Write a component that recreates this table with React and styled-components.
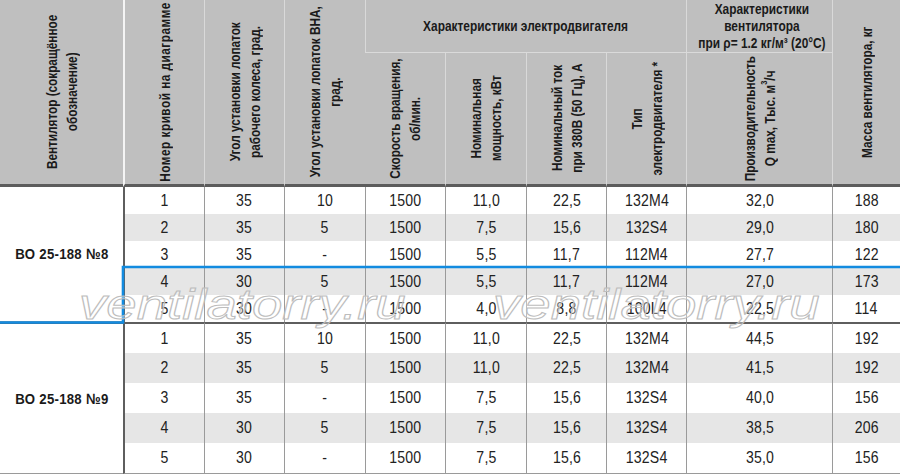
import React from 'react';
import styled, { createGlobalStyle } from 'styled-components';

const SANS = `"Liberation Sans", Arial, sans-serif`;

const GlobalStyle = createGlobalStyle`
  html, body {
    margin: 0;
    padding: 0;
    background: #fff;
  }
  body {
    font-family: ${SANS};
    color: #1e1e1e;
  }
`;

const COLUMNS = [123, 81, 80, 81, 80, 81, 80, 80, 146, 68];

const GROUPS = [
  {
    name: 'ВО 25-188 №8',
    heights: [27, 27, 27, 27, 27],
    rows: [
      ['1', '35', '10', '1500', '11,0', '22,5', '132M4', '32,0', '188'],
      ['2', '35', '5', '1500', '7,5', '15,6', '132S4', '29,0', '180'],
      ['3', '35', '-', '1500', '5,5', '11,7', '112M4', '27,7', '122'],
      ['4', '30', '5', '1500', '5,5', '11,7', '112M4', '27,0', '173'],
      ['5', '30', '-', '1500', '4,0', '8,8', '100L4', '22,5', '114'],
    ],
  },
  {
    name: 'ВО 25-188 №9',
    heights: [31, 30, 30, 30, 31],
    rows: [
      ['1', '35', '10', '1500', '11,0', '22,5', '132M4', '44,5', '192'],
      ['2', '35', '5', '1500', '11,0', '22,5', '132M4', '41,5', '192'],
      ['3', '35', '-', '1500', '7,5', '15,6', '132S4', '40,0', '156'],
      ['4', '30', '5', '1500', '7,5', '15,6', '132S4', '38,5', '206'],
      ['5', '30', '-', '1500', '7,5', '15,6', '132S4', '35,0', '156'],
    ],
  },
];

// tall header cell content: the frame keeps the row height fixed,
// the label is rotated to read bottom-to-top
function VerticalLabel({ children, spaced, height }) {
  return (
    <Frame $h={height}>
      <Rotated $spaced={spaced}>{children}</Rotated>
    </Frame>
  );
}

export default function App() {
  return (
    <>
      <GlobalStyle />
      <Sheet>
        <Table>
          <colgroup>
            {COLUMNS.map((w, i) => (
              <Col key={i} $w={w} />
            ))}
          </colgroup>
          <thead>
            <HeadRow $h={53}>
              <HeadCell rowSpan={2} $bottom>
                <VerticalLabel height={180}>
                  Вентилятор (сокращённое
                  <br />
                  обозначение)
                </VerticalLabel>
              </HeadCell>
              <HeadCell rowSpan={2} $bottom $first>
                <VerticalLabel height={180} spaced>
                  Номер кривой на диаграмме
                </VerticalLabel>
              </HeadCell>
              <HeadCell rowSpan={2} $bottom>
                <VerticalLabel height={180}>
                  Угол установки лопаток
                  <br />
                  рабочего колеса, град.
                </VerticalLabel>
              </HeadCell>
              <HeadCell rowSpan={2} $bottom>
                <VerticalLabel height={180}>
                  Угол установки лопаток ВНА,
                  <br />
                  град.
                </VerticalLabel>
              </HeadCell>
              <HeadCell colSpan={4} $split>
                <GroupTitle>Характеристики электродвигателя</GroupTitle>
              </HeadCell>
              <HeadCell $split>
                <GroupTitle>
                  Характеристики
                  <br />
                  вентилятора
                  <br />
                  при ρ= 1.2 кг/м³ (20°C)
                </GroupTitle>
              </HeadCell>
              <HeadCell rowSpan={2} $bottom>
                <VerticalLabel height={180}>Масса вентилятора, кг</VerticalLabel>
              </HeadCell>
            </HeadRow>
            <HeadRow $h={134}>
              <HeadCell $bottom>
                <VerticalLabel height={128}>
                  Скорость вращения,
                  <br />
                  об/мин.
                </VerticalLabel>
              </HeadCell>
              <HeadCell $bottom>
                <VerticalLabel height={128}>
                  Номинальная
                  <br />
                  мощность, кВт
                </VerticalLabel>
              </HeadCell>
              <HeadCell $bottom>
                <VerticalLabel height={128}>
                  Номинальный ток
                  <br />
                  при 380В (50 Гц), А
                </VerticalLabel>
              </HeadCell>
              <HeadCell $bottom>
                <VerticalLabel height={128}>
                  Тип
                  <br />
                  электродвигателя *
                </VerticalLabel>
              </HeadCell>
              <HeadCell $bottom>
                <VerticalLabel height={128}>
                  Производительность
                  <br />
                  Q max, Тыс. м<sup>3</sup>/ч
                </VerticalLabel>
              </HeadCell>
            </HeadRow>
          </thead>
          <tbody>
            {GROUPS.map((group, gi) =>
              group.rows.map((row, ri) => (
                <BodyRow key={`${gi}-${ri}`} $h={group.heights[ri]}>
                  {ri === 0 && (
                    <LabelCell rowSpan={group.rows.length} $divider={gi > 0}>
                      <Condensed $bold>{group.name}</Condensed>
                    </LabelCell>
                  )}
                  {row.map((value, ci) => (
                    <Cell
                      key={ci}
                      $first={ci === 0}
                      $shade={ri % 2 === 1}
                      $divider={gi > 0 && ri === 0}
                      $last={gi === GROUPS.length - 1 && ri === group.rows.length - 1}
                    >
                      <Condensed>{value}</Condensed>
                    </Cell>
                  ))}
                </BodyRow>
              ))
            )}
          </tbody>
        </Table>

        <Overlay>
          <Highlight width="900" height="474" viewBox="0 0 900 474">
            <polyline
              points="0,322.5 123,322.5 123,267 900,267"
              fill="none"
              stroke="#128be0"
              strokeWidth="2.6"
            />
          </Highlight>
          <Watermark $left={79}>ventilatorry.ru</Watermark>
          <Watermark $left={493}>ventilatorry.ru</Watermark>
        </Overlay>
      </Sheet>
    </>
  );
}

const Sheet = styled.div`
  position: relative;
  width: 900px;
  height: 474px;
  overflow: hidden;
  background: #fff;
`;

const Table = styled.table`
  width: 900px;
  table-layout: fixed;
  border-collapse: separate;
  border-spacing: 0;
  font-family: ${SANS};
`;

const Col = styled.col`
  width: ${p => p.$w}px;
`;

const HeadRow = styled.tr`
  height: ${p => p.$h}px;
`;

const HeadCell = styled.th`
  box-sizing: border-box;
  padding: 0;
  background: #bfbfbf;
  color: #1a1a1a;
  font-weight: 700;
  text-align: center;
  vertical-align: middle;
  overflow: hidden;
  border-left: ${p => (p.$first ? '2px solid #f4f4f4' : '1px solid #d9d9d9')};
  border-bottom: ${p =>
    p.$bottom ? '3px solid #5c5c5c' : p.$split ? '1px solid #dadada' : 'none'};

  &:first-child {
    border-left: none;
  }
`;

const GroupTitle = styled.div`
  display: inline-block;
  font-size: 14px;
  line-height: 17px;
  white-space: nowrap;
  transform: scaleX(0.85);
`;

const Frame = styled.div`
  height: ${p => p.$h}px;
  display: flex;
  align-items: center;
  justify-content: center;
`;

const Rotated = styled.span`
  display: inline-block;
  flex: none;
  writing-mode: vertical-rl;
  transform: rotate(180deg) scaleY(0.84);
  font-size: 14px;
  line-height: 20px;
  letter-spacing: ${p => (p.$spaced ? '0.6px' : '0')};
  white-space: nowrap;
  text-align: center;

  sup {
    font-size: 9px;
    line-height: 0;
  }
`;

const BodyRow = styled.tr`
  height: ${p => p.$h}px;
`;

const LabelCell = styled.td`
  box-sizing: border-box;
  padding: 0;
  background: #fff;
  text-align: center;
  vertical-align: middle;
  color: #1a1a1a;
  white-space: nowrap;
  border-top: ${p => (p.$divider ? '2px solid #5e5e5e' : 'none')};
  border-bottom: 1px solid #9a9a9a;
`;

const Cell = styled.td`
  box-sizing: border-box;
  padding: 0;
  text-align: center;
  vertical-align: middle;
  color: #222;
  white-space: nowrap;
  background: ${p => (p.$shade ? '#e6e6e6' : '#fff')};
  border-left: ${p => (p.$first ? '2px solid #5e5e5e' : '1px solid #9a9a9a')};
  border-top: ${p => (p.$divider ? '2px solid #5e5e5e' : 'none')};
  border-bottom: ${p => (p.$last ? '1px solid #9a9a9a' : 'none')};
`;

const Condensed = styled.span`
  display: inline-block;
  font-size: ${p => (p.$bold ? '15px' : '16px')};
  font-weight: ${p => (p.$bold ? 700 : 400)};
  letter-spacing: ${p => (p.$bold ? '0.3px' : '0.2px')};
  transform: scaleX(0.88);
`;

const Overlay = styled.div`
  position: absolute;
  inset: 0;
  pointer-events: none;
`;

const Highlight = styled.svg`
  position: absolute;
  left: 0;
  top: 0;
`;

const Watermark = styled.span`
  position: absolute;
  left: ${p => p.$left}px;
  top: 281px;
  font-family: ${SANS};
  font-style: italic;
  font-size: 42px;
  line-height: 48px;
  color: rgba(255, 255, 255, 0.35);
  -webkit-text-stroke: 1px #bdbdbd;
  transform: scaleX(1.3);
  transform-origin: left top;
  white-space: nowrap;
`;
